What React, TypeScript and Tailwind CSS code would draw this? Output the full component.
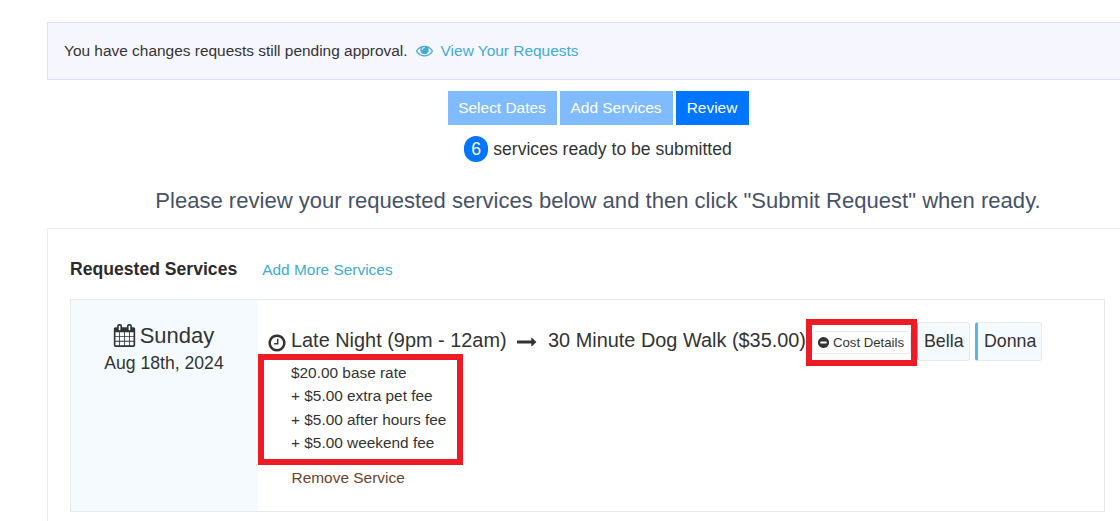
import React from "react";

type IconProps = {
  path: string;
  className?: string;
};

const icons = {
  eye: "M1664 960q-152-236-381-353 61 104 61 225 0 185-131.5 316.5t-316.5 131.5-316.5-131.5-131.5-316.5q0-121 61-225-229 117-381 353 133 205 333.5 326.5t434.5 121.5 434.5-121.5 333.5-326.5zm-720-384q0-20-14-34t-34-14q-125 0-214.5 89.5t-89.5 214.5q0 20 14 34t34 14 34-14 14-34q0-86 61-147t147-61q20 0 34-14t14-34zm848 384q0 34-20 69-140 230-376.5 368.5t-499.5 138.5-499.5-139-376.5-368q-20-35-20-69t20-69q140-229 376.5-368t499.5-139 499.5 139 376.5 368q20 35 20 69z",
  calendar:
    "M192 1664h288v-288h-288v288zm352 0h320v-288h-320v288zm-352-352h288v-320h-288v320zm352 0h320v-320h-320v320zm-352-384h288v-288h-288v288zm736 736h320v-288h-320v288zm-384-736h320v-288h-320v288zm768 736h288v-288h-288v288zm-384-352h320v-320h-320v320zm-352-864v-288q0-13-9.5-22.5t-22.5-9.5h-64q-13 0-22.5 9.5t-9.5 22.5v288q0 13 9.5 22.5t22.5 9.5h64q13 0 22.5-9.5t9.5-22.5zm736 864h288v-320h-288v320zm-384-384h320v-288h-320v288zm384 0h288v-288h-288v288zm32-480v-288q0-13-9.5-22.5t-22.5-9.5h-64q-13 0-22.5 9.5t-9.5 22.5v288q0 13 9.5 22.5t22.5 9.5h64q13 0 22.5-9.5t9.5-22.5zm384-64v1280q0 52-38 90t-90 38h-1408q-52 0-90-38t-38-90v-1280q0-52 38-90t90-38h128v-96q0-66 47-113t113-47h64q66 0 113 47t47 113v96h384v-96q0-66 47-113t113-47h64q66 0 113 47t47 113v96h128q52 0 90 38t38 90z",
  clock:
    "M1024 544v448q0 14-9 23t-23 9h-320q-14 0-23-9t-9-23v-64q0-14 9-23t23-9h224v-352q0-14 9-23t23-9h64q14 0 23 9t9 23zm416 352q0-148-73-273t-198-198-273-73-273 73-198 198-73 273 73 273 198 198 273 73 273-73 198-198 73-273zm224 0q0 209-103 385.5t-279.5 279.5-385.5 103-385.5-103-279.5-279.5-103-385.5 103-385.5 279.5-279.5 385.5-103 385.5 103 279.5 279.5 103 385.5z",
  minus:
    "M1344 960v-128q0-26-19-45t-45-19h-768q-26 0-45 19t-19 45v128q0 26 19 45t45 19h768q26 0 45-19t19-45zm320-64q0 209-103 385.5t-279.5 279.5-385.5 103-385.5-103-279.5-279.5-103-385.5 103-385.5 279.5-279.5 385.5-103 385.5 103 279.5 279.5 103 385.5z",
  arrow:
    "M1728 893q0 14-10 24l-384 354q-16 14-35 6-19-9-19-29v-224h-1248q-14 0-23-9t-9-23v-192q0-14 9-23t23-9h1248v-224q0-21 19-29t35 5l384 350q10 10 10 23z",
};

const Icon = ({ path, className }: IconProps) => (
  <svg viewBox="0 0 1792 1792" fill="currentColor" className={className}>
    <path d={path} />
  </svg>
);

const steps = [
  { label: "Select Dates", style: "w-[109px] bg-[#80bbff]" },
  { label: "Add Services", style: "w-[113px] bg-[#80bbff]" },
  { label: "Review", style: "w-[73px] bg-[#0075ff]" },
];

const fees = [
  "$20.00 base rate",
  "+ $5.00 extra pet fee",
  "+ $5.00 after hours fee",
  "+ $5.00 weekend fee",
];

const Pet = ({ name, className }: { name: string; className: string }) => (
  <span
    className={`mb-[2px] flex h-[39px] items-center rounded-[3px] border border-[#e7eaec] border-l-[#5ab4ea] bg-[#f5fafe] text-[17.8px] ${className}`}
  >
    {name}
  </span>
);

const ServiceRow = () => (
  <div className="flex h-[213px] w-[1035px] border border-[#e7eaec]">
    <div className="w-[187px] bg-[#f5fafe] pt-[21px] text-center">
      <div className="flex h-7 items-center justify-center gap-[4px] pr-[2px] text-[22px]">
        <Icon path={icons.calendar} className="size-[23px]" />
        Sunday
      </div>
      <div className="h-[28px] pr-px text-[17.6px] leading-[28px]">Aug 18th, 2024</div>
    </div>
    <div>
      <div className="mt-[19px] flex h-[47px] items-center whitespace-nowrap pl-[9px]">
        <Icon path={icons.clock} className="size-5" />
        <span className="mb-[3px] ml-1 w-[225px] text-[19.9px]">Late Night (9pm - 12am)</span>
        <Icon path={icons.arrow} className="mb-[2px] ml-px size-5" />
        <span className="mb-[3px] ml-[11px] w-[258px] text-[19.9px]">30 Minute Dog Walk ($35.00)</span>
        <div className="flex h-[47px] w-[111px] items-center justify-center border-[6px] border-[#ed1c24]">
          <button className="flex h-[23px] w-[99px] items-center justify-center gap-[3px] rounded-[3px] border border-[#e7eaec] pr-[2px] text-[13.2px]">
            <Icon path={icons.minus} className="size-[13px]" />
            Cost Details
          </button>
        </div>
        <Pet name="Bella" className="w-[53px] pl-1.5" />
        <Pet name="Donna" className="ml-[5px] w-[67px] border-l-[3px] pl-1.5" />
      </div>
      <div className="-mt-[12px] h-[111px] w-[205px] border-[6px] border-[#ed1c24] pl-[27px] pt-px text-[15.4px] leading-[23.3px]">
        {fees.map((fee) => (
          <div key={fee}>{fee}</div>
        ))}
      </div>
      <a className="ml-[33.5px] block text-[15.45px] leading-[25px] text-[#6b432f]">
        Remove Service
      </a>
    </div>
  </div>
);

const App = () => {
  return (
    <div className="h-[521px] w-[1120px] overflow-hidden bg-white font-['Liberation_Sans',Arial,sans-serif] text-[#333]">
      <div className="ml-[47px] w-[1102px] pt-[22px]">
        <div className="flex h-[58px] items-center border border-[#e0e0fa] bg-[#f6f6ff] pl-4 text-[15.45px]">
          You have changes requests still pending approval.
          <a className="ml-2 flex items-center gap-2 text-[#42abd4]">
            <Icon path={icons.eye} className="size-[17px]" />
            View Your Requests
          </a>
        </div>

        <div className="mt-[11px] flex justify-center gap-[3px]">
          {steps.map((step) => (
            <span
              key={step.label}
              className={`flex h-[34px] items-center justify-center whitespace-nowrap text-[15.45px] text-white ${step.style}`}
            >
              {step.label}
            </span>
          ))}
        </div>

        <div className="mt-[11px] flex h-[26px] items-center justify-center gap-[5px] text-[17.6px]">
          <span className="flex h-[26px] w-6 items-center justify-center rounded-[12px] bg-[#0075ff] text-white">
            6
          </span>
          services ready to be submitted
        </div>

        <h2 className="mt-[22px] h-[34px] whitespace-nowrap text-center text-[22.05px] leading-[34px] text-[#475266]">
          Please review your requested services below and then click "Submit Request" when ready.
        </h2>

        <div className="mt-[10px] h-[320px] border border-[#ececec] pl-[22px]">
          <div className="flex h-[70px] items-center gap-[25px] pt-[11px]">
            <h3 className="text-[17.6px] font-bold text-[#2b2b2f]">Requested Services</h3>
            <a className="text-[15.45px] text-[#42abd4]">Add More Services</a>
          </div>
          <ServiceRow />
        </div>
      </div>
    </div>
  );
};

export default App;
